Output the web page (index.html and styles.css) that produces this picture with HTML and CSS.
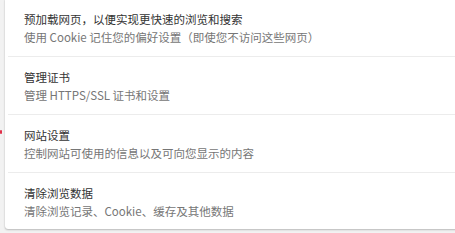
FILE: index.html
```html
<!DOCTYPE html>
<html lang="zh-CN">
<head>
<meta charset="utf-8">
<link rel="stylesheet" href="styles.css">
</head>
<body>
<div class="page">
  <span class="marker"></span>
  <div class="card">
    <div class="row">
      <div class="title">预加载网页，以便实现更快速的浏览和搜索</div>
      <div class="sub">使用 Cookie 记住您的偏好设置（即使您不访问这些网页）</div>
    </div>
    <div class="row">
      <div class="title">管理证书</div>
      <div class="sub">管理 HTTPS/SSL 证书和设置</div>
    </div>
    <div class="row">
      <div class="title">网站设置</div>
      <div class="sub">控制网站可使用的信息以及可向您显示的内容</div>
    </div>
    <div class="row last">
      <div class="title">清除浏览数据</div>
      <div class="sub">清除浏览记录、Cookie、缓存及其他数据</div>
    </div>
  </div>
</div>
</body>
</html>
```

FILE: styles.css
```css
html, body {
  margin: 0;
  padding: 0;
  background: #f2f2f2;
  height: 100%;
  overflow: hidden;
}
.page {
  position: relative;
  font-family: "Microsoft YaHei", "Noto Sans CJK SC", "Noto Sans", sans-serif;
  font-size: 11.5px;
}
.marker {
  position: absolute;
  left: 0;
  top: 131px;
  width: 2px;
  height: 4px;
  background: #e0304a;
  border-radius: 1px;
}
.card {
  margin-left: 5px;
  margin-top: -1px;
  width: 470px;
  background: #fff;
  border-radius: 0 0 3px 3px;
  box-shadow: 0 1px 2px rgba(0,0,0,0.22), 0 0 1px rgba(0,0,0,0.18);
}
.row {
  height: 58px;
  display: flex;
  flex-direction: column;
  justify-content: center;
  margin-left: 3px;
  padding-left: 16px;
  border-bottom: 1px solid #ececec;
  box-sizing: border-box;
}
.row.last {
  border-bottom: none;
  height: 56px;
  padding-top: 2px;
}
.title {
  color: #333;
  line-height: 18px;
}
.sub {
  color: #767676;
  line-height: 18px;
}
```
